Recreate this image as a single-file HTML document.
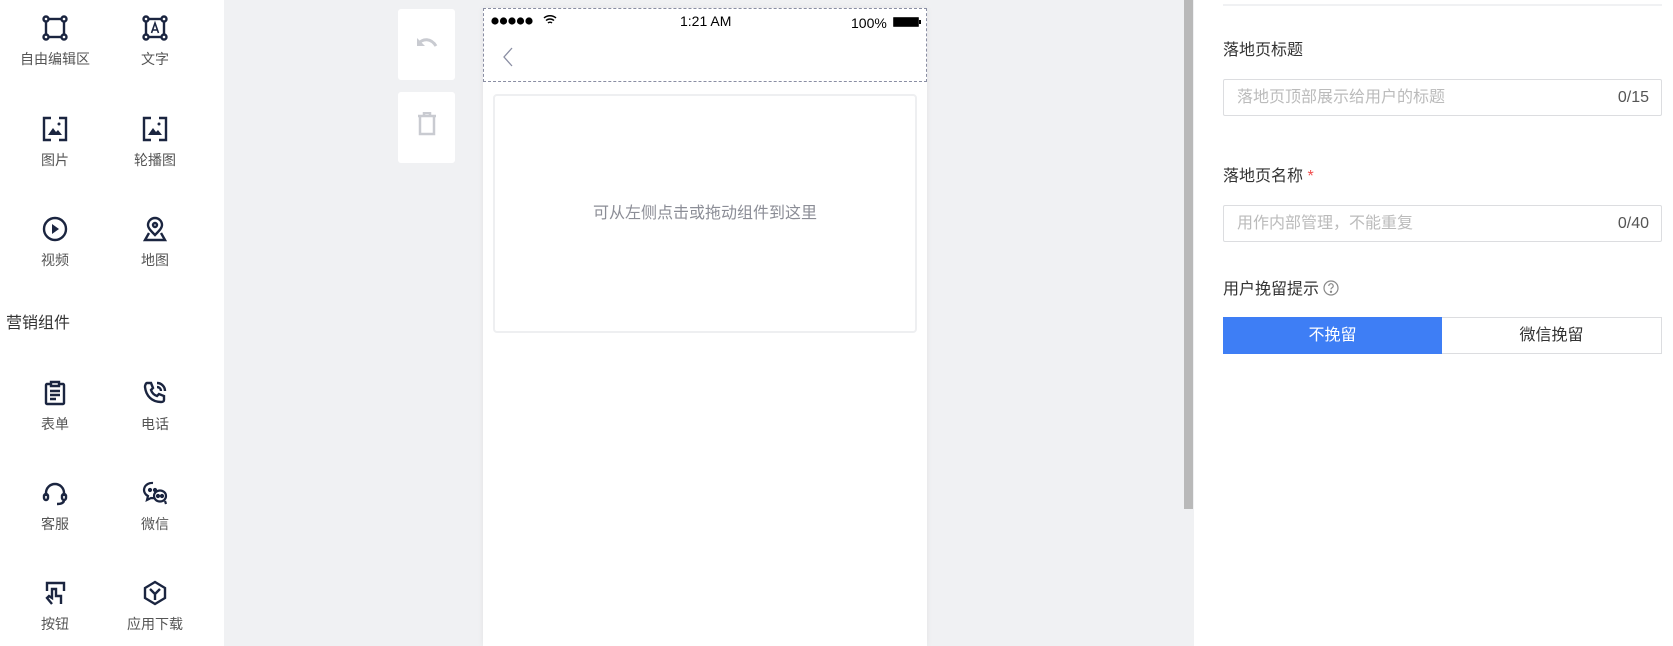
<!DOCTYPE html>
<html><head><meta charset="utf-8"><style>
*{margin:0;padding:0;box-sizing:border-box}
body{width:1673px;height:646px;overflow:hidden;background:#f0f1f3;font-family:"Liberation Sans","Noto Sans CJK SC",sans-serif;position:relative}
.abs{position:absolute}
.left{left:0;top:0;width:224px;height:646px;background:#fff}
.item{position:absolute;width:100px;text-align:center;font-size:14px;color:#555}
.item svg{display:block;margin:0 auto 8px}
.hdr{left:6px;top:309px;font-size:16px;color:#333}
.btn{background:#fff;border-radius:3px;width:57px}
.phone{left:483px;top:8px;width:444px;height:638px;background:#fff;box-shadow:0 0 6px rgba(0,0,0,.06)}
.status{left:483px;top:8px;width:444px;height:74px;border:1px dashed #8a8ea3}
.drop{left:493px;top:94px;width:424px;height:239px;border:2px solid #eeeff1;border-radius:4px;text-align:center;line-height:235px;font-size:16px;color:#8b8d96}
.right{left:1194px;top:0;width:479px;height:646px;background:#fff}
.lbl{font-size:16px;color:#333;position:absolute;left:1223px}
.inp{position:absolute;left:1223px;width:439px;height:37px;border:1px solid #dcdde0;border-radius:2px;font-size:16px;color:#bbb;padding-left:13px;line-height:35px}
.inp span{position:absolute;right:12px;color:#555}
</style></head><body>
<div class="abs left"></div>
<div class="item" style="left:5px;top:15px"><svg width="26" height="26" viewBox="0 0 26 26" fill="none" stroke="#1b2540" stroke-width="2.4"><rect x="4" y="4" width="18" height="18"/><circle cx="4" cy="4" r="2.5" fill="#fff"/><circle cx="22" cy="4" r="2.5" fill="#fff"/><circle cx="4" cy="22" r="2.5" fill="#fff"/><circle cx="22" cy="22" r="2.5" fill="#fff"/></svg>自由编辑区</div>
<div class="item" style="left:105px;top:15px"><svg width="26" height="26" viewBox="0 0 26 26" fill="none" stroke="#1b2540" stroke-width="2.4"><rect x="4" y="4" width="18" height="18"/><circle cx="4" cy="4" r="2.5" fill="#fff"/><circle cx="22" cy="4" r="2.5" fill="#fff"/><circle cx="4" cy="22" r="2.5" fill="#fff"/><circle cx="22" cy="22" r="2.5" fill="#fff"/><path d="M9.5 18L13 8l3.5 10M10.8 15h4.4" stroke-width="1.6"/></svg>文字</div>
<div class="item" style="left:5px;top:116px"><svg width="26" height="26" viewBox="0 0 26 26" fill="none" stroke="#1b2540" stroke-width="2.4"><path d="M9 2H2v22h7M17 2h7v22h-7"/><circle cx="17" cy="8" r="1.5" fill="#1b2540" stroke="none"/><path d="M6 19l5-7 3 4 2-2 4 5z" fill="#1b2540" stroke="none"/></svg>图片</div>
<div class="item" style="left:105px;top:116px"><svg width="26" height="26" viewBox="0 0 26 26" fill="none" stroke="#1b2540" stroke-width="2.4"><path d="M9 2H2v22h7M17 2h7v22h-7"/><circle cx="17" cy="8" r="1.5" fill="#1b2540" stroke="none"/><path d="M6 19l5-7 3 4 2-2 4 5z" fill="#1b2540" stroke="none"/></svg>轮播图</div>
<div class="item" style="left:5px;top:216px"><svg width="26" height="26" viewBox="0 0 26 26" fill="none" stroke="#1b2540" stroke-width="2.4"><circle cx="13" cy="13" r="11"/><path d="M10 8l7 5-7 5z" fill="#1b2540" stroke="none"/></svg>视频</div>
<div class="item" style="left:105px;top:216px"><svg width="26" height="26" viewBox="0 0 26 26" fill="none" stroke="#1b2540" stroke-width="2.4"><path d="M13 19c-4-4-7-7-7-10a7 7 0 0 1 14 0c0 3-3 6-7 10z"/><circle cx="13" cy="9" r="2"/><path d="M7 17l-4 7h20l-4-7"/></svg>地图</div>
<div class="abs hdr">营销组件</div>
<div class="item" style="left:5px;top:380px"><svg width="26" height="26" viewBox="0 0 26 26" fill="none" stroke="#1b2540" stroke-width="2.4"><rect x="4" y="4" width="18" height="20" rx="1"/><path d="M9 2h8v4H9z" fill="#fff"/><path d="M8 11h10M8 15h10M8 19h6"/></svg>表单</div>
<div class="item" style="left:105px;top:380px"><svg width="26" height="26" viewBox="0 0 26 26" fill="none" stroke="#1b2540" stroke-width="2.4"><path d="M5 3l4 0 2 5-2 2c1 3 3 5 6 6l2-2 5 2v4c0 1-1 2-3 2C10 22 4 16 3 7c0-2 1-4 2-4z"/><path d="M15 3a8 8 0 0 1 8 8M15 7a4 4 0 0 1 4 4"/></svg>电话</div>
<div class="item" style="left:5px;top:480px"><svg width="26" height="26" viewBox="0 0 26 26" fill="none" stroke="#1b2540" stroke-width="2.4"><path d="M4 16v-3a9 9 0 0 1 18 0v3"/><rect x="2" y="14" width="4" height="6" rx="2"/><rect x="20" y="14" width="4" height="6" rx="2"/><path d="M22 20c0 3-3 4-7 4"/></svg>客服</div>
<div class="item" style="left:105px;top:480px"><svg width="26" height="26" viewBox="0 0 26 26" fill="none" stroke="#1b2540" stroke-width="2.2"><path d="M11 3a8 7 0 0 0-5 13l-1 4 4-2a9 9 0 0 0 3 0"/><ellipse cx="18" cy="16" rx="6" ry="5.5"/><path d="M23 21l1 3"/><circle cx="8" cy="10" r="1" fill="#1b2540"/><circle cx="13" cy="10" r="1" fill="#1b2540"/><circle cx="16" cy="16" r="1" fill="#1b2540"/><circle cx="20" cy="16" r="1" fill="#1b2540"/></svg>微信</div>
<div class="item" style="left:5px;top:580px"><svg width="26" height="26" viewBox="0 0 26 26" fill="none" stroke="#1b2540" stroke-width="2.4"><path d="M5 11V3h17v8M10 24l-5-6 2-2 3 2V9h4v7h5v8"/></svg>按钮</div>
<div class="item" style="left:105px;top:580px"><svg width="26" height="26" viewBox="0 0 26 26" fill="none" stroke="#1b2540" stroke-width="2.4"><path d="M13 2l10 6v10l-10 6-10-6V8z"/><path d="M8 9l5 5 5-5M13 14v6"/></svg>应用下载</div>

<div class="abs btn" style="left:398px;top:9px;height:71px"><svg class="abs" style="left:17px;top:26px" width="24" height="18" viewBox="0 0 24 18" fill="none" stroke="#c9cbd1" stroke-width="3"><path d="M3 9c5-6 13-6 18 2"/><path d="M2 3v8h8" fill="#c9cbd1" stroke="none"/></svg></div>
<div class="abs btn" style="left:398px;top:92px;height:71px"><svg class="abs" style="left:19px;top:20px" width="20" height="24" viewBox="0 0 20 24" fill="none" stroke="#c9cbd1" stroke-width="2.5"><path d="M1 4h18M7 4V1h6v3M3 5v17h14V5"/></svg></div>

<div class="abs phone"></div>
<div class="abs status">
<svg class="abs" style="left:7px;top:8px" width="44" height="8" viewBox="0 0 44 8" fill="#000"><circle cx="4" cy="4" r="3.6"/><circle cx="12.5" cy="4" r="3.6"/><circle cx="21" cy="4" r="3.6"/><circle cx="29.5" cy="4" r="3.6"/><circle cx="38" cy="4" r="3.6"/></svg>
<svg class="abs" style="left:59px;top:5px" width="14" height="11" viewBox="0 0 14 11" fill="none" stroke="#000" stroke-width="1.5"><path d="M1 4a9 9 0 0 1 12 0M3 6.5a6 6 0 0 1 8 0M5 9a3 3 0 0 1 4 0"/></svg>
<div class="abs" style="left:196px;top:4px;font-size:14px;color:#000">1:21 AM</div>
<div class="abs" style="left:367px;top:6px;font-size:14px;color:#000">100%</div>
<div class="abs" style="left:409px;top:8px;width:26px;height:10px;background:#000;border:1px solid #333;border-radius:1px"></div>
<div class="abs" style="left:435px;top:11px;width:2px;height:4px;background:#000"></div>
<svg class="abs" style="left:18px;top:38px" width="12" height="20" viewBox="0 0 12 20" fill="none" stroke="#8a8ea3" stroke-width="1.3"><path d="M10 1L2 10l8 9"/></svg>
</div>
<div class="abs drop">可从左侧点击或拖动组件到这里</div>

<div class="abs" style="left:1184px;top:0;width:9px;height:509px;background:#b9b9b9"></div>
<div class="abs right"></div>
<div class="abs" style="left:1223px;top:4px;width:439px;height:2px;background:#f0f1f3"></div>
<div class="lbl" style="top:36px">落地页标题</div>
<div class="inp" style="top:79px">落地页顶部展示给用户的标题<span>0/15</span></div>
<div class="lbl" style="top:162px">落地页名称 <span style="color:#f04b4b">*</span></div>
<div class="inp" style="top:205px">用作内部管理，不能重复<span>0/40</span></div>
<div class="lbl" style="top:275px">用户挽留提示 <svg style="vertical-align:-2px" width="16" height="16" viewBox="0 0 16 16" fill="none" stroke="#888" stroke-width="1.2"><circle cx="8" cy="8" r="7"/><path d="M5.8 6a2.2 2.2 0 1 1 2.9 2c-.6.3-.7.6-.7 1.4"/><circle cx="8" cy="11.8" r=".6" fill="#888"/></svg></div>
<div class="abs" style="left:1223px;top:317px;width:219px;height:37px;background:#3e7ef5;color:#fff;font-size:16px;text-align:center;line-height:37px">不挽留</div>
<div class="abs" style="left:1442px;top:317px;width:220px;height:37px;border:1px solid #dcdde0;border-left:none;color:#333;font-size:16px;text-align:center;line-height:35px">微信挽留</div>
</body></html>
